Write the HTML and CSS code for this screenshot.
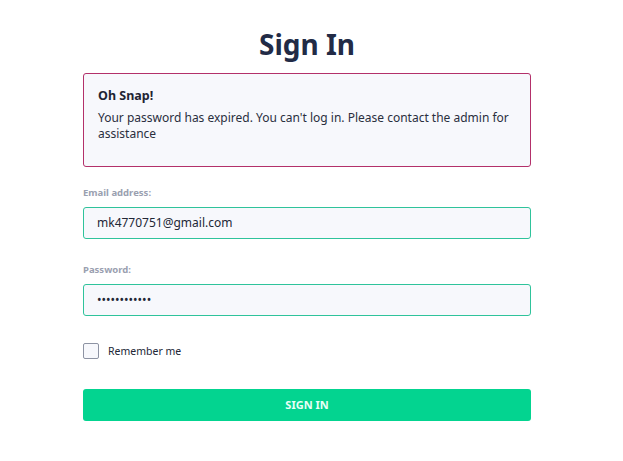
FILE: index.html
```html
<!DOCTYPE html>
<html>
<head>
<meta charset="utf-8">
<link rel="stylesheet" href="styles.css">
</head>
<body>
<div class="page">
  <h1 class="title">Sign In</h1>
  <div class="alert">
    <div class="alert-title">Oh Snap!</div>
    <div class="alert-text">Your password has expired. You can't log in. Please contact the admin for assistance</div>
  </div>
  <div class="field">
    <label class="label">Email address:</label>
    <div class="input">mk4770751@gmail.com</div>
  </div>
  <div class="field">
    <label class="label">Password:</label>
    <div class="input dots">••••••••••••</div>
  </div>
  <div class="remember">
    <span class="checkbox"></span>
    <span class="remember-text">Remember me</span>
  </div>
  <div class="button">SIGN IN</div>
</div>
</body>
</html>
```
FILE: styles.css
```css
* { box-sizing: border-box; }
body {
  margin: 0;
  background: #fff;
  font-family: "Noto Sans", "Open Sans", sans-serif;
  color: #232b45;
}
.page {
  width: 448px;
  margin: 0 0 0 83px;
  padding-top: 24px;
}
.title {
  margin: 0;
  text-align: center;
  font-size: 28px;
  line-height: 41px;
  font-weight: 700;
  color: #222b46;
}
.alert {
  margin-top: 8px;
  height: 94px;
  border: 1px solid #b3306a;
  border-radius: 3px;
  background: #f7f8fc;
  padding: 13px 14px;
}
.alert-title {
  font-size: 12.5px;
  font-weight: 700;
  line-height: 18px;
  color: #1f2433;
}
.alert-text {
  margin-top: 5px;
  font-size: 12px;
  line-height: 16px;
  color: #2a2f3e;
}
.field { margin-top: 19px; }
.field + .field { margin-top: 24px; }
.label {
  display: block;
  font-size: 9.5px;
  font-weight: 700;
  color: #9aa0b0;
  line-height: 13px;
}
.input {
  margin-top: 8px;
  height: 32px;
  border: 1px solid #2fc39b;
  border-radius: 3px;
  background: #f7f8fc;
  padding: 0 13px;
  font-size: 12px;
  line-height: 30px;
  color: #222736;
}
.dots { font-size: 12px; }
.remember {
  margin-top: 27px;
  display: flex;
  align-items: center;
  gap: 9px;
}
.checkbox {
  width: 16px;
  height: 16px;
  border: 1px solid #8d93a3;
  border-radius: 2px;
  background: #f7f8fc;
}
.remember-text {
  font-size: 10.5px;
  color: #222736;
}
.button {
  margin-top: 30px;
  height: 32px;
  border-radius: 3px;
  background: #03d490;
  color: #e8fff6;
  text-align: center;
  font-size: 11px;
  font-weight: 700;
  line-height: 32px;
}
```
